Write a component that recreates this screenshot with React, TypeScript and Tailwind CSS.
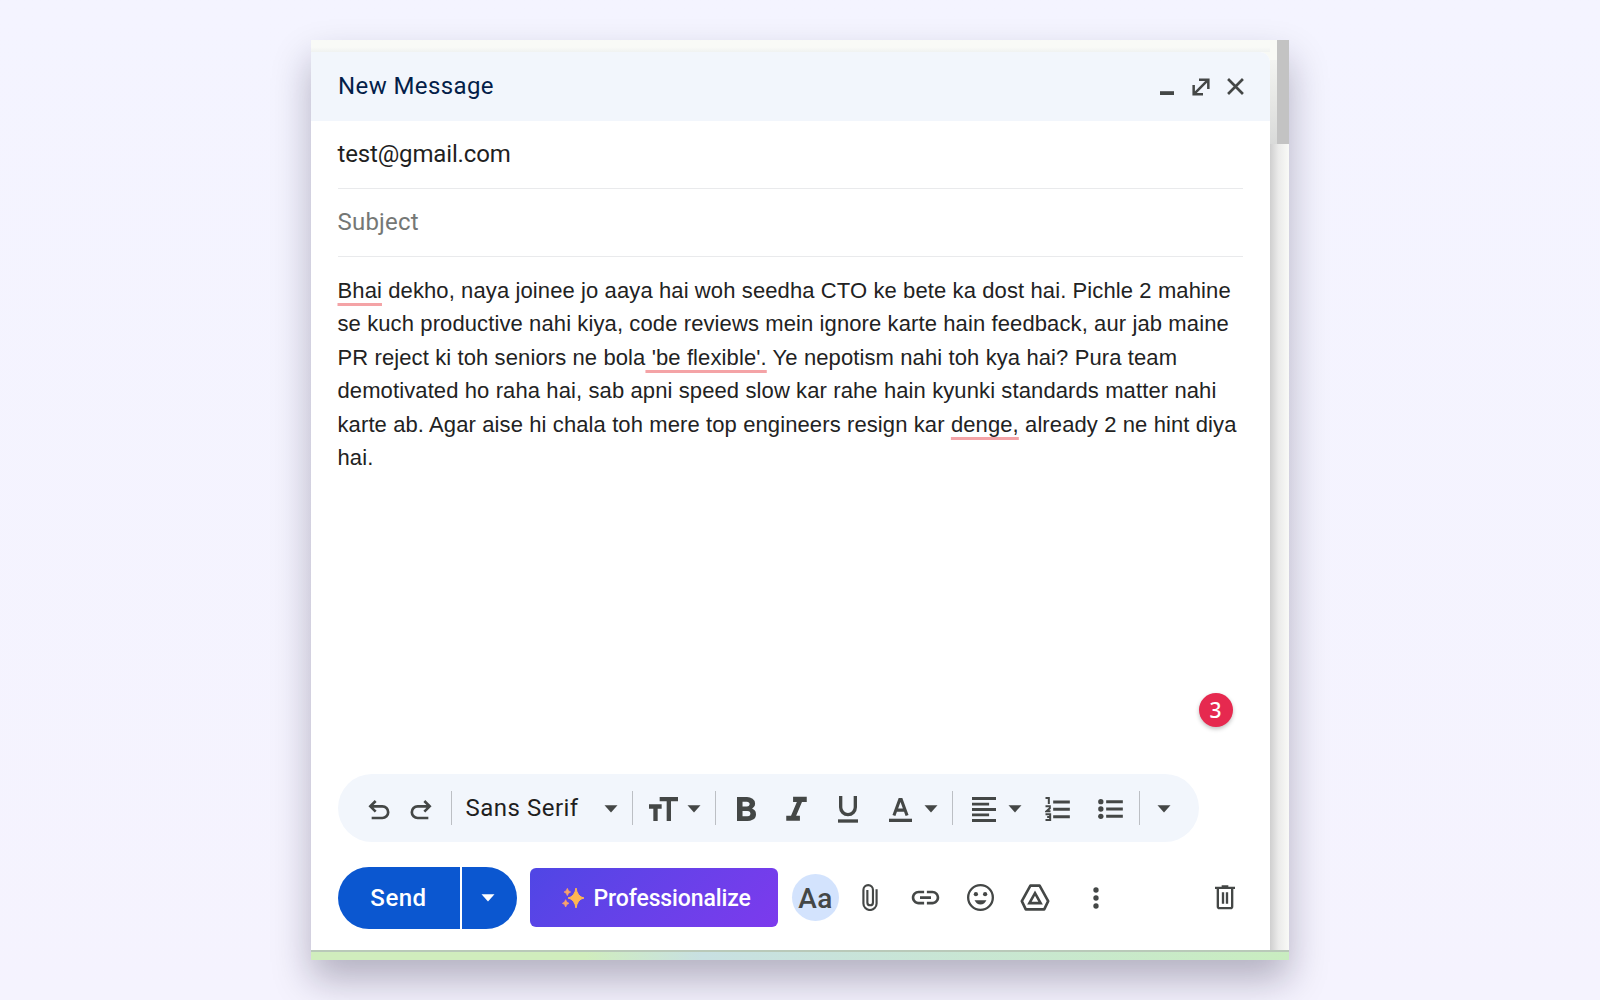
import React from 'react';
import { MdFormatItalic, MdLink } from 'react-icons/md';

interface IPart {
  text: string;
  marked?: boolean;
}

const lines: IPart[][] = [
  [{ text: 'Bhai', marked: true }, { text: ' dekho, naya joinee jo aaya hai woh seedha CTO ke bete ka dost hai. Pichle 2 mahine' }],
  [{ text: 'se kuch productive nahi kiya, code reviews mein ignore karte hain feedback, aur jab maine' }],
  [{ text: 'PR reject ki toh seniors ne bola' }, { text: " 'be flexible'.", marked: true }, { text: ' Ye nepotism nahi toh kya hai? Pura team' }],
  [{ text: 'demotivated ho raha hai, sab apni speed slow kar rahe hain kyunki standards matter nahi' }],
  [{ text: 'karte ab. Agar aise hi chala toh mere top engineers resign kar ' }, { text: 'denge,', marked: true }, { text: ' already 2 ne hint diya' }],
  [{ text: 'hai.' }],
];

const Caret: React.FC<{ className?: string }> = ({ className = '' }) => (
  <svg viewBox="0 0 14 8" className={`h-2 w-3.5 shrink-0 ${className}`} fill="currentColor">
    <path d="M.5.300h13L7 7.400z" />
  </svg>
);

const Divider: React.FC<{ className?: string }> = ({ className = '' }) => (
  <div className={`h-[34px] w-px shrink-0 bg-[#bcbfc4] ${className}`} />
);

const Header: React.FC = () => (
  <div className="flex h-[69px] shrink-0 items-center rounded-tr-[10px] bg-[#f2f6fc] pl-[27px] pr-[26px] text-[#444746]">
    <h1 className="grow pb-0.5 text-[24px] leading-none tracking-[0.4px] text-[#041e49]">New Message</h1>
    <svg viewBox="0 0 14 18" className="h-[18px] w-3.5" fill="currentColor">
      <path d="M0 13.200h14v3.800H0z" />
    </svg>
    <svg viewBox="0 0 54 54" className="ml-[18px] h-[18px] w-[18px]" fill="none" stroke="currentColor" strokeWidth="7.500">
      <path d="M21 5h28v28M49 5 5 49M5 21v28h28" />
    </svg>
    <svg viewBox="0 0 48 48" className="ml-[17px] h-[17px] w-[17px]" fill="none" stroke="currentColor" strokeWidth="7.500">
      <path d="M3 3l42 42M45 3 3 45" />
    </svg>
  </div>
);

const FormatBar: React.FC = () => (
  <div className="flex h-[68px] w-[861px] shrink-0 items-center rounded-full bg-[#f2f6fc] pl-[30px] text-[#444746]">
    <svg viewBox="0 0 66 60" className="mt-[3px] h-5 w-[22px]" fill="none" stroke="currentColor" strokeWidth="8">
      <path d="M11 54h32a17 17 0 0 0 0-35H6M23 3 7 19l16 16" />
    </svg>
    <svg viewBox="0 0 66 60" className="ml-5 mt-[3px] h-5 w-[22px]" fill="none" stroke="currentColor" strokeWidth="8">
      <path d="M55 54H23a17 17 0 0 1 0-35h37M43 3l16 16-16 16" />
    </svg>
    <Divider className="ml-[19px]" />
    <span className="ml-[14px] w-[113px] whitespace-nowrap text-[24px] leading-none tracking-[0.500px] text-[#1f1f1f]">Sans Serif</span>
    <Caret className="ml-[25px] mt-0.5" />
    <Divider className="ml-[14px]" />
    <svg viewBox="0 0 87 72" className="ml-[16px] mt-0.5 h-6 w-[29px]" fill="currentColor">
      <path d="M32 0h55v13H66v59H53V13H32zM0 22h38v13H26v37H13V35H0z" />
    </svg>
    <Caret className="ml-[9px] mt-0.5" />
    <Divider className="ml-[14px]" />
    <svg viewBox="272 -760 416 560" className="ml-[21px] mt-0.5 h-6 w-[19px]" fill="currentColor" preserveAspectRatio="none">
      <path d="M272-200v-560h221q65 0 120 40t55 111q0 51-23 78.500T602-491q25 11 55.500 41t30.500 90q0 89-65 124.500T501-200H272Zm121-112h104q48 0 58.500-24.500T566-372q0-11-10.500-35.500T494-432H393v120Zm0-228h93q33 0 48-17t15-38q0-24-17-39t-44-15h-95v109Z" />
    </svg>
    <MdFormatItalic className="ml-5 mt-[5px] h-[41px] w-[41px]" />
    <svg viewBox="0 0 60 81" className="ml-[21px] mt-[3px] h-[27px] w-5" fill="none" stroke="currentColor" strokeWidth="10">
      <path d="M8 0v34a22 22 0 0 0 44 0V0" />
      <path d="M0 75h60" />
    </svg>
    <svg viewBox="0 0 70 73" className="ml-[31px] mt-[3px] h-[24px] w-[23px]" fill="none" stroke="currentColor" strokeWidth="9.500">
      <path d="M15 53 33 4h4l18 49M21 37h28" />
      <path d="M0 68h70" strokeWidth="10" />
    </svg>
    <Caret className="ml-3 mt-0.5" />
    <Divider className="ml-[14px]" />
    <svg viewBox="0 0 73 75" className="ml-[19px] mt-0.5 h-[25px] w-6" fill="none" stroke="currentColor" strokeWidth="8.500">
      <path d="M0 4h73M0 21h52M0 37.500h73M0 54h52M0 71h73" />
    </svg>
    <Caret className="ml-3 mt-0.5" />
    <svg viewBox="0 0 74 72" className="ml-[23px] mt-0.5 h-6 w-[25px]" fill="none" stroke="currentColor" strokeWidth="9">
      <path d="M24 15h50M24 37h50M24 59h50" />
      <path d="M1 3h10v18M1 28h13v6L4 43h12M1 52h14v17H1M6 60h9" strokeWidth="6" />
    </svg>
    <svg viewBox="0 0 74 60" className="ml-7 mt-0.5 h-5 w-[25px]" fill="none" stroke="currentColor" strokeWidth="9">
      <path d="M24 8h50M24 30h50M24 52h50" />
      <g fill="currentColor" stroke="none">
        <circle cx="8" cy="8" r="8" />
        <circle cx="8" cy="30" r="8" />
        <circle cx="8" cy="52" r="8" />
      </g>
    </svg>
    <Divider className="ml-4" />
    <Caret className="ml-[17px] mt-0.5" />
  </div>
);

const ActionBar: React.FC = () => (
  <div className="flex h-[62px] shrink-0 items-center pb-px text-[#444746]">
    <div className="flex h-[62px] w-[179px] shrink-0 overflow-hidden rounded-full text-white">
      <button className="flex w-[122px] items-center justify-center bg-[#0b57d0] pt-px text-[24px] font-medium tracking-[0.500px]">Send</button>
      <button className="ml-0.5 flex grow items-center bg-[#0b57d0] pl-[19px]">
        <Caret />
      </button>
    </div>
    <button className="ml-[13px] flex h-[59px] w-[248px] shrink-0 items-center rounded-[6px] bg-linear-135 from-[#4f46e5] to-[#7c3aed] pl-8 text-white">
      <svg viewBox="0 0 66 60" className="h-5 w-[22px]" fill="#ffb752">
        <path d="M42 0q4 26 24 30-20 4-24 30-4-26-24-30Q38 26 42 0z" stroke="#ffb752" strokeWidth="3" />
        <path d="M16 1q2 9 10 11-8 2-10 11-2-9-10-11 8-2 10-11z" fill="#f9a26c" stroke="#f9a26c" strokeWidth="2" />
        <path d="M11 35q2 9 10 11-8 2-10 11-2-9-10-11 8-2 10-11z" fill="#f9a26c" stroke="#f9a26c" strokeWidth="2" />
      </svg>
      <span className="ml-[10px] mt-0.5 text-[23px] font-medium leading-none tracking-[-0.120px]">Professionalize</span>
    </button>
    <div className="ml-3.5 flex h-[47px] w-[47px] shrink-0 items-center justify-center rounded-full bg-[#d3e3fd] pl-px pt-0.5 text-[28px] font-medium leading-none tracking-[0.500px]">Aa</div>
    <svg viewBox="0 0 48 82" className="ml-[23px] h-[27px] w-4" fill="none" stroke="currentColor" strokeWidth="6.500">
      <path d="M44 16v43a20 20 0 0 1-40 0V18a14.500 14.500 0 0 1 29 0v38a8.500 8.500 0 0 1-17 0V18" />
    </svg>
    <MdLink className="ml-[31px] h-[33px] w-[33px]" />
    <svg viewBox="0 0 82 82" className="ml-[25px] h-[27px] w-[27px]" fill="none" stroke="currentColor" strokeWidth="7">
      <circle cx="41" cy="41" r="37.500" />
      <g fill="currentColor" stroke="none">
        <circle cx="27" cy="31" r="6.500" />
        <circle cx="55" cy="31" r="6.500" />
        <path d="M23 49h36q-6 13-18 13t-18-13z" />
      </g>
    </svg>
    <svg viewBox="0 0 90 82" className="ml-[26px] h-[27px] w-[30px]" fill="none" stroke="currentColor" strokeWidth="8" strokeLinejoin="round">
      <path d="M31 5h28l26 47-12 25H17L5 52z" />
      <path d="M45 28 62 58H28z" strokeLinejoin="miter" />
    </svg>
    <svg viewBox="0 0 18 66" className="ml-[43px] h-[22px] w-1.5" fill="currentColor">
      <circle cx="9" cy="9" r="8" />
      <circle cx="9" cy="33" r="8" />
      <circle cx="9" cy="57" r="8" />
    </svg>
    <svg viewBox="0 0 60 74" className="ml-[116px] h-[25px] w-5" fill="none" stroke="currentColor" strokeWidth="7">
      <path d="M0 8h60M20 4h20M8.500 8v56q0 5 5 5h33q5 0 5-5V8" />
      <path d="M24 21v35M36 21v35" />
    </svg>
  </div>
);

const App: React.FC = () => {
  return (
    <div className="flex h-[1000px] w-[1600px] justify-center overflow-hidden bg-linear-to-b from-[#f4f4ff] to-[#f5f3fe] pt-10 font-[Roboto,sans-serif]">
      <div className="flex h-[920px] w-[978px] flex-col shadow-[0_20px_36px_rgba(20,15,45,0.290)]">
        <div className="flex h-[910px] bg-[#f8f9f5]">
          <div className="flex w-[959px] flex-col">
            <div className="h-3 shrink-0 bg-linear-to-b from-[#f9faf7] from-60% to-[#f0f2f1]" />
            <div className="flex grow flex-col rounded-tr-[10px] bg-white">
              <Header />
              <div className="flex grow flex-col pl-[26.500px] pr-[27px]">
                <div className="flex h-[68px] shrink-0 items-center border-b border-[#e9eaec] pb-0.5 text-[24px] tracking-[-0.150px] text-[#1f1f1f]">test@gmail.com</div>
                <div className="flex h-[68px] shrink-0 items-center border-b border-[#e9eaec] pb-0.5 text-[24px] tracking-[0.200px] text-[#757775]">Subject</div>
                <div className="relative mt-[17px] h-[500px] shrink-0 font-['Liberation_Sans',sans-serif] text-[22px] leading-[33.400px] tracking-[0.108px] text-[#222]">
                  {lines.map((line, i) => (
                    <p key={i} className="whitespace-pre">
                      {line.map((part, j) => (
                        <span key={j} className={part.marked ? 'underline decoration-[#f4a3a6] decoration-[3px] underline-offset-[5px] [text-decoration-skip-ink:none]' : ''}>{part.text}</span>
                      ))}
                    </p>
                  ))}
                  <div className="absolute right-[10px] top-[419px] flex h-[34px] w-[34px] items-center justify-center rounded-full bg-[#e6294f] font-['Noto_Sans',sans-serif] text-[21px] font-medium leading-none text-white shadow-[0_2px_4px_rgba(0,0,0,0.25)]">3</div>
                </div>
                <FormatBar />
                <div className="h-[25px] shrink-0" />
                <ActionBar />
              </div>
            </div>
          </div>
          <div className="flex grow flex-col">
            <div className="flex h-[104px] justify-between">
              <div className="flex w-[7px] flex-col">
                <div className="h-5 bg-[#f8f9f5]" />
                <div className="grow bg-linear-to-b from-[#f3f4f1] to-[#d9dad9]" />
              </div>
              <div className="w-[12.500px] bg-[#c3c3c3]" />
            </div>
            <div className="grow bg-linear-to-r from-[#cfcfcf] via-[#ebebea] via-45% to-[#f9faf7]" />
          </div>
        </div>
        <div className="h-2.5 border-t-2 border-[#b9c9b9] bg-linear-to-r from-[#d0edbd] from-28% via-[#c8e0e2] via-40% to-[#c9edc0]" />
      </div>
    </div>
  );
};

export default App;
